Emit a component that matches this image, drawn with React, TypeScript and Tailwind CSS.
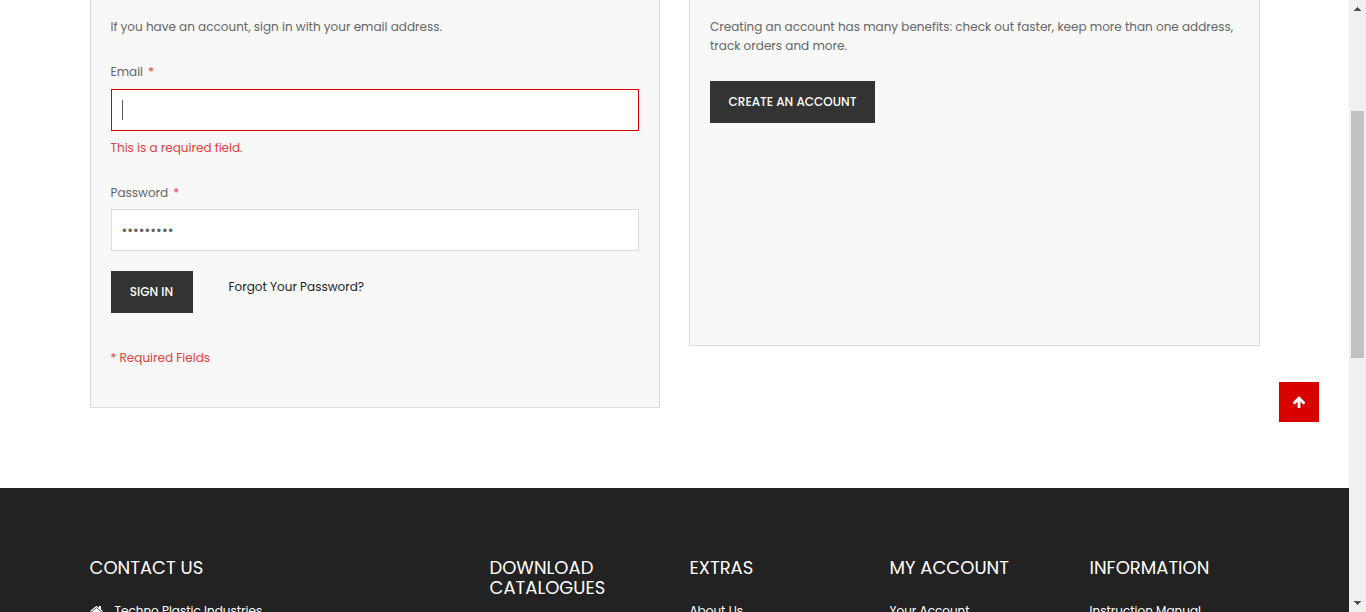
const footerColumns = [
  { title: 'Download Catalogues', links: [] as string[] },
  { title: 'Extras', links: ['About Us'] },
  { title: 'My Account', links: ['Your Account'] },
  { title: 'Information', links: ['Instruction Manual'] },
];

const buttonStyle =
  'inline-flex h-[42px] items-center justify-center bg-[#333] pb-[2px] text-[12px] font-medium text-white uppercase whitespace-nowrap';

function ArrowUpIcon() {
  return (
    <svg width="14" height="14" viewBox="0 0 1792 1792" fill="currentColor" aria-hidden="true">
      <path d="M1675 971q0 51-37 90l-75 75q-38 38-91 38-54 0-90-38l-294-293v704q0 52-37.5 84.5t-90.5 32.5h-128q-53 0-90.5-32.5t-37.5-84.5v-704l-294 293q-36 38-90 38t-90-38l-75-75q-38-38-38-90 0-53 38-91l651-651q35-37 90-37 54 0 91 37l651 651q37 39 37 91z" />
    </svg>
  );
}

function HomeIcon() {
  return (
    <svg width="14" height="14" viewBox="64 0 1792 1792" fill="currentColor" aria-hidden="true">
      <path d="M1472 992v480q0 26-19 45t-45 19h-384v-384h-256v384h-384q-26 0-45-19t-19-45v-480q0-1 .5-3t.5-3l575-474 575 474q1 2 1 6zm223-69l-62 74q-8 9-21 11h-3q-13 0-21-7l-692-577-692 577q-12 8-24 7-13-2-21-11l-62-74q-8-10-7-23.5t11-21.5l719-599q32-26 76-26t76 26l244 204v-195q0-14 9-23t23-9h192q14 0 23 9t9 23v408l219 182q10 8 11 21.5t-7 23.5z" />
    </svg>
  );
}

function RequiredMark() {
  return <span className="ml-[5px] text-[#e23f3c]">*</span>;
}

function SignInPanel() {
  return (
    <section className="border-x border-b border-[#dcdcdc] bg-[#f8f8f8] px-5 pt-[17px] pb-10">
      <p>If you have an account, sign in with your email address.</p>
      <form onSubmit={(event) => event.preventDefault()} noValidate>
        <label htmlFor="email" className="mt-[26px] block">
          Email
          <RequiredMark />
        </label>
        <div className="relative mt-2">
          <input
            id="email"
            type="email"
            aria-invalid="true"
            aria-describedby="email-error"
            className="block h-[42px] w-full border border-[#d90000] bg-white px-[10px] caret-transparent outline-none"
          />
          <span aria-hidden="true" className="absolute top-[11px] left-[11px] h-5 w-px bg-[#555]" />
        </div>
        <p id="email-error" className="mt-[7px] text-[#e23f3c]">
          This is a required field.
        </p>
        <label htmlFor="password" className="mt-[26px] block">
          Password
          <RequiredMark />
        </label>
        <input
          id="password"
          type="password"
          defaultValue="catalogue"
          className="mt-[7px] block h-[42px] w-full border border-[#dcdcdc] bg-white px-[10px] text-[14px] outline-none"
        />
        <div className="mt-5 flex items-start">
          <button type="submit" className={`${buttonStyle} w-[82px]`}>
            Sign In
          </button>
          <a href="#forgot" className="mt-[6px] ml-9 text-[#222]">
            Forgot Your Password?
          </a>
        </div>
        <p className="mt-[35px] text-[#e23f3c]">* Required Fields</p>
      </form>
    </section>
  );
}

function NewCustomerPanel() {
  return (
    <section className="h-[346px] border-x border-b border-[#dcdcdc] bg-[#f8f8f8] px-5 pt-[17px]">
      <p>
        Creating an account has many benefits: check out faster, keep more than one address, track
        orders and more.
      </p>
      <a href="#create" className={`${buttonStyle} mt-[26px] w-[165px]`}>
        Create an Account
      </a>
    </section>
  );
}

function Footer() {
  return (
    <footer className="flex-1 bg-[#222] pt-[70px] text-white">
      <div className="mx-auto grid max-w-[1170px] grid-cols-6 gap-[30px]">
        <div className="col-span-2">
          <h2 className="text-[18px] leading-5 uppercase">Contact Us</h2>
          <p className="mt-[23px] flex items-center gap-[11px]">
            <HomeIcon />
            Techno Plastic Industries
          </p>
        </div>
        {footerColumns.map((column) => (
          <nav key={column.title} aria-label={column.title}>
            <h2 className="text-[18px] leading-5 uppercase">{column.title}</h2>
            {column.links.map((link) => (
              <a key={link} href="#footer" className="mt-[23px] block whitespace-nowrap">
                {link}
              </a>
            ))}
          </nav>
        ))}
      </div>
    </footer>
  );
}

function ScrollTrack() {
  return (
    <div
      aria-hidden="true"
      className="flex w-[17px] shrink-0 flex-col items-center justify-between bg-[#f0f0f0] py-[7px]"
    >
      <svg width="7" height="4" viewBox="0 0 7 4" fill="#505050" shapeRendering="crispEdges">
        <path d="M3 0h1v1h1v1h1v1h1v1H0V3h1V2h1V1h1z" />
      </svg>
      <div className="flex w-full flex-1 flex-col px-[2px] pt-[100px]">
        <div className="h-[247px] bg-[#c1c1c1]" />
      </div>
      <svg width="7" height="4" viewBox="0 0 7 4" fill="#505050" shapeRendering="crispEdges">
        <path d="M0 0h7v1H6v1H5v1H4v1H3V3H2V2H1V1H0z" />
      </svg>
    </div>
  );
}

export default function App() {
  return (
    <div className="flex h-screen overflow-hidden bg-white font-['Poppins','Inter',sans-serif] text-[12px] leading-[19px] text-[#666]">
      <div className="flex min-w-0 flex-1 flex-col">
        <main className="mx-auto grid w-full max-w-[1170px] grid-cols-2 items-start gap-[29px] pb-20">
          <SignInPanel />
          <NewCustomerPanel />
        </main>
        <Footer />
      </div>
      <button
        type="button"
        aria-label="Back to top"
        className="fixed right-[47px] bottom-[190px] flex size-10 items-center justify-center bg-[#d90000] text-white"
      >
        <ArrowUpIcon />
      </button>
      <ScrollTrack />
    </div>
  );
}
